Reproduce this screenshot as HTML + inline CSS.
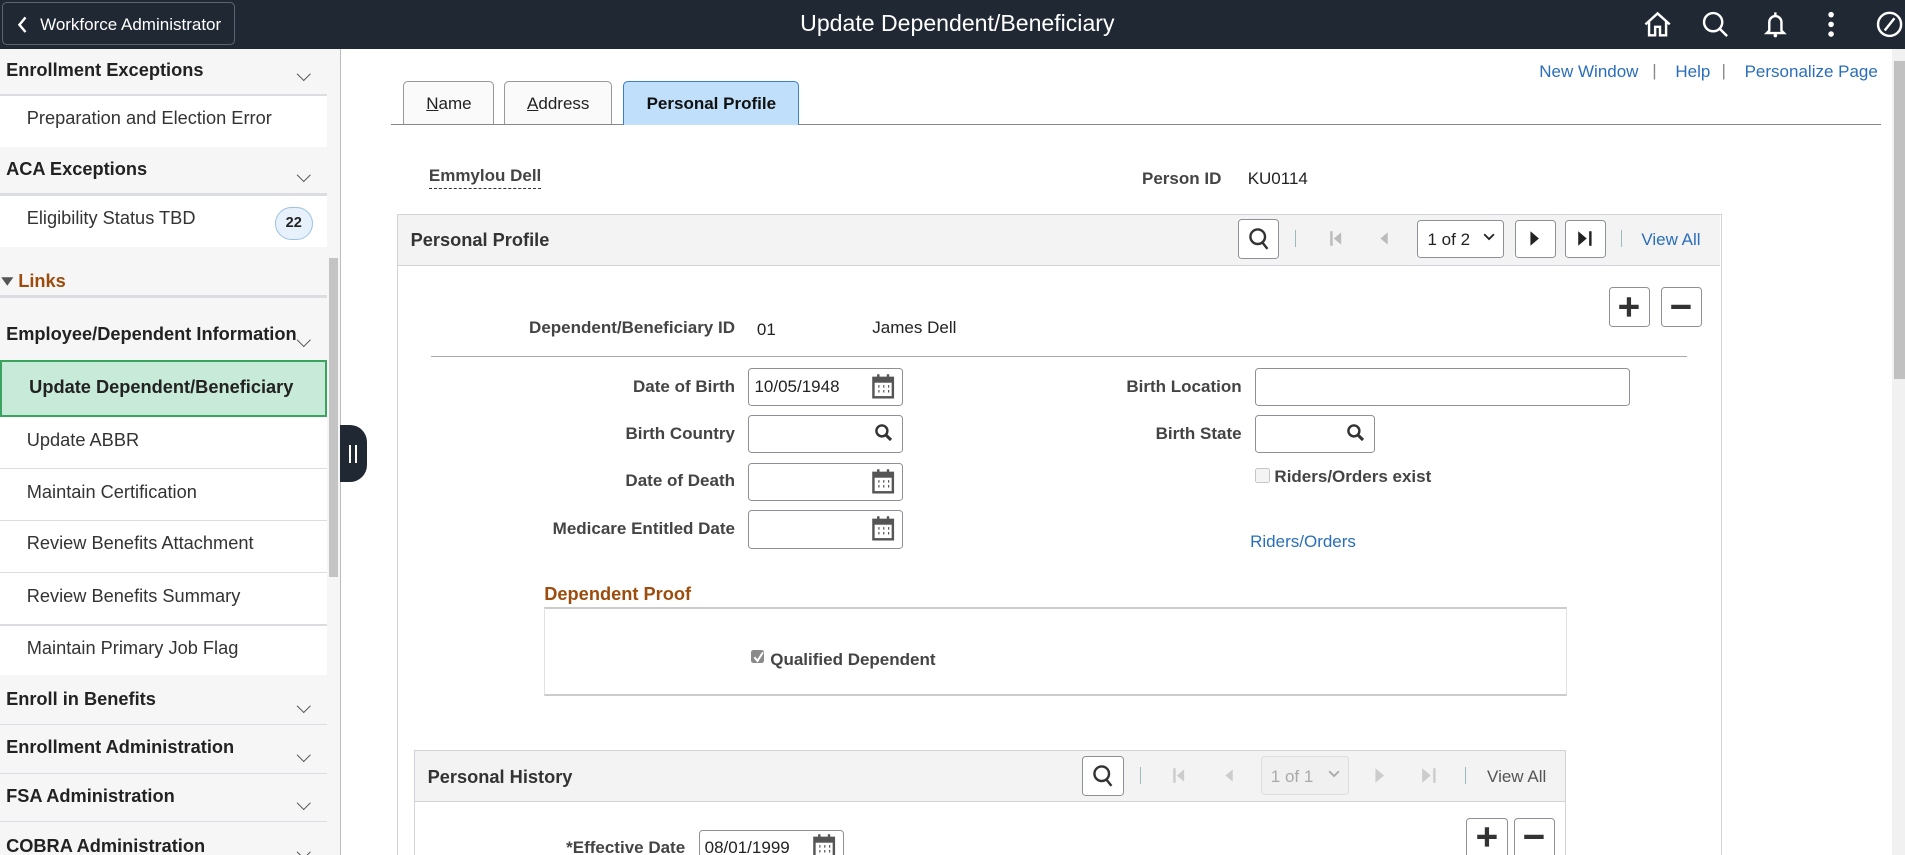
<!DOCTYPE html>
<html><head><meta charset="utf-8">
<style>
html,body{margin:0;padding:0;overflow:hidden;background:#fff;}
body{width:1905px;height:855px;}
#r{zoom:1.2149;width:1568px;height:704px;position:relative;overflow:hidden;font-family:"Liberation Sans",Arial,sans-serif;font-size:14px;color:#333;}
.a{position:absolute;white-space:nowrap;}
.hdr{left:0;top:0;width:1568px;height:40px;background:#1f2833;}
.sb{left:0;top:40px;width:280px;height:664px;background:#f6f6f6;border-right:1px solid #b9bcc2;}
.sec{position:absolute;left:5px;font-weight:bold;font-size:15px;color:#222;}
.chev{position:absolute;left:246px;width:7px;height:7px;border-right:1.3px solid #555;border-bottom:1.3px solid #555;transform:rotate(45deg);}
.item{position:absolute;left:0;width:269px;background:#fff;}
.item span{position:absolute;left:22px;font-size:15px;color:#333;}
.ln{position:absolute;left:0;width:269px;height:2px;background:#dcdde0;}
.blue{color:#2a6ebb;}
.lbl{position:absolute;font-weight:bold;color:#444;text-align:right;}
.inp{position:absolute;border:1px solid #8d9096;border-radius:3px;background:#fff;height:29px;box-sizing:border-box;}
.btn{position:absolute;border:1px solid #8d9096;border-radius:3px;background:#fff;box-sizing:border-box;}
</style></head><body><div id="r">
<div class="a hdr"></div>
<div class="a" style="left:2px;top:2px;width:190px;height:33px;border:1px solid #5b6470;border-radius:4px;"></div>
<svg class="a" style="left:14px;top:12px" width="10" height="16"><path d="M7 2L2 8l5 6" stroke="#fff" stroke-width="2" fill="none"/></svg>
<div class="a" style="left:33px;top:12px;color:#fff;font-size:14px;">Workforce Administrator</div>
<div class="a" style="left:0;width:1576px;top:8px;text-align:center;color:#fff;font-size:19px;">Update Dependent/Beneficiary</div>
<svg class="a" style="left:1352px;top:9px" width="24" height="22"><path d="M2 11L12 2l10 9M5 9v11h5v-7h4v7h5V9" stroke="#fff" stroke-width="2" fill="none"/></svg>
<svg class="a" style="left:1400px;top:8px" width="24" height="24"><circle cx="10" cy="10" r="7.5" stroke="#fff" stroke-width="2" fill="none"/><path d="M15.5 15.5l6 6" stroke="#fff" stroke-width="2"/></svg>
<svg class="a" style="left:1450px;top:8px" width="22" height="24"><path d="M11 2v3M6 17V10a5 5 0 0110 0v7l2 2H4z" stroke="#fff" stroke-width="2" fill="none"/><circle cx="11" cy="21" r="1.5" fill="#fff"/></svg>
<svg class="a" style="left:1502px;top:9px" width="10" height="22"><circle cx="5" cy="3" r="2.3" fill="#fff"/><circle cx="5" cy="11" r="2.3" fill="#fff"/><circle cx="5" cy="19" r="2.3" fill="#fff"/></svg>
<svg class="a" style="left:1543px;top:9px" width="24" height="24"><circle cx="12" cy="11" r="9.5" stroke="#fff" stroke-width="2" fill="none"/><path d="M16 6l-8 10" stroke="#fff" stroke-width="2"/></svg>

<div class="a sb"></div>
<div class="sec" style="top:49px">Enrollment Exceptions</div><div class="chev" style="top:57px"></div>
<div class="ln" style="top:77px"></div>
<div class="item" style="top:79px;height:42px"><span style="top:10px">Preparation and Election Error</span></div>
<div class="sec" style="top:131px">ACA Exceptions</div><div class="chev" style="top:140px"></div>
<div class="ln" style="top:159px"></div>
<div class="item" style="top:161px;height:42px"><span style="top:10px">Eligibility Status TBD</span>
<div style="position:absolute;left:226px;top:9px;width:30px;height:26px;border:1px solid #9dc1e6;border-radius:14px;background:#e6f1fb;text-align:center;line-height:26px;font-size:12px;font-weight:bold;color:#222">22</div></div>
<svg class="a" style="left:0;top:227px" width="12" height="10"><path d="M1 1h10L6 8z" fill="#555"/></svg>
<div class="a" style="left:15px;top:223px;color:#9c4d0d;font-weight:bold;font-size:15px">Links</div>
<div class="ln" style="top:243px"></div>
<div class="sec" style="top:267px">Employee/Dependent Information</div><div class="chev" style="top:276px"></div>
<div class="a" style="left:0;top:296px;width:269px;height:47px;background:#c8ead8;border:2px solid #3aa35e;box-sizing:border-box"></div>
<div class="a" style="left:24px;top:310px;font-size:15px;font-weight:bold;color:#222">Update Dependent/Beneficiary</div>
<div class="item" style="top:343px;height:42px"><span style="top:11px">Update ABBR</span></div>
<div class="ln" style="top:385px;height:1px"></div>
<div class="item" style="top:386px;height:42px"><span style="top:11px">Maintain Certification</span></div>
<div class="ln" style="top:428px;height:1px"></div>
<div class="item" style="top:429px;height:42px"><span style="top:10px">Review Benefits Attachment</span></div>
<div class="ln" style="top:471px;height:1px"></div>
<div class="item" style="top:472px;height:42px"><span style="top:10px">Review Benefits Summary</span></div>
<div class="ln" style="top:514px;height:1px"></div>
<div class="item" style="top:515px;height:41px"><span style="top:10px">Maintain Primary Job Flag</span></div>
<div class="sec" style="top:567px">Enroll in Benefits</div><div class="chev" style="top:577px"></div>
<div class="ln" style="top:596px;height:1px"></div>
<div class="sec" style="top:607px">Enrollment Administration</div><div class="chev" style="top:617px"></div>
<div class="ln" style="top:636px;height:1px"></div>
<div class="sec" style="top:647px">FSA Administration</div><div class="chev" style="top:657px"></div>
<div class="ln" style="top:676px;height:1px"></div>
<div class="sec" style="top:688px">COBRA Administration</div><div class="chev" style="top:697px"></div>
<div class="a" style="left:271px;top:212px;width:7px;height:263px;background:#c4c4c4"></div>
<div class="a" style="left:280px;top:350px;width:22px;height:47px;background:#1f2833;border-radius:0 14px 14px 0"></div>
<div class="a" style="left:287px;top:366px;width:2px;height:15px;background:#fff"></div>
<div class="a" style="left:292px;top:366px;width:2px;height:15px;background:#fff"></div>

<div class="a" style="left:1557px;top:40px;width:11px;height:664px;background:#f1f1f1"></div>
<div class="a" style="left:1559px;top:50px;width:9px;height:262px;background:#c1c1c1"></div>

<div class="a blue" style="left:1267px;top:51px">New Window</div>
<div class="a" style="left:1360px;top:50px;color:#888">|</div>
<div class="a blue" style="left:1379px;top:51px">Help</div>
<div class="a" style="left:1417px;top:50px;color:#888">|</div>
<div class="a blue" style="left:1436px;top:51px">Personalize Page</div>

<div class="a" style="left:322px;top:102px;width:1226px;height:1px;background:#888"></div>
<div class="a" style="left:332px;top:67px;width:75px;height:35px;border:1px solid #999;border-bottom:none;border-radius:4px 4px 0 0;background:#fafafa;box-sizing:border-box;text-align:center;line-height:36px;color:#222"><u>N</u>ame</div>
<div class="a" style="left:415px;top:67px;width:89px;height:35px;border:1px solid #999;border-bottom:none;border-radius:4px 4px 0 0;background:#fafafa;box-sizing:border-box;text-align:center;line-height:36px;color:#222"><u>A</u>ddress</div>
<div class="a" style="left:513px;top:67px;width:145px;height:36px;border:1px solid #3b7fd0;border-bottom:none;border-radius:4px 4px 0 0;background:#bfdffa;box-sizing:border-box;text-align:center;line-height:36px;color:#111;font-weight:bold">Personal Profile</div>

<div class="a" style="left:353px;top:137px;font-weight:bold;color:#444;border-bottom:1px dashed #333;padding-bottom:1px">Emmylou Dell</div>
<div class="a" style="left:940px;top:139px;font-weight:bold;color:#444">Person ID</div>
<div class="a" style="left:1027px;top:139px;color:#222">KU0114</div>

<div class="a" style="left:327px;top:176px;width:1090px;height:540px;border:1px solid #d0d3d8;box-sizing:border-box"></div>
<div class="a" style="left:328px;top:177px;width:1088px;height:41px;background:#f3f3f3;border-bottom:1px solid #d0d3d8"></div>
<div class="a" style="left:338px;top:189px;font-weight:bold;font-size:15px;color:#333">Personal Profile</div>
<div class="btn" style="left:1019px;top:180px;width:34px;height:33px"></div>
<svg class="a" style="left:1027px;top:187px" width="18" height="20"><circle cx="8" cy="8" r="6" stroke="#333" stroke-width="2" fill="none"/><path d="M12 13l4 5" stroke="#333" stroke-width="2"/></svg>
<div class="a" style="left:1066px;top:189px;width:1px;height:14px;background:#9bb"></div>
<svg class="a" style="left:1094px;top:189px" width="12" height="14"><path d="M2 1v12" stroke="#bbb" stroke-width="2"/><path d="M10 2v10L4 7z" fill="#bbb"/></svg>
<svg class="a" style="left:1134px;top:189px" width="10" height="14"><path d="M8 2v10L2 7z" fill="#bbb"/></svg>
<div class="btn" style="left:1166px;top:181px;width:72px;height:31px"></div>
<div class="a" style="left:1175px;top:189px;color:#222">1 of 2</div>
<svg class="a" style="left:1221px;top:192px" width="10" height="8"><path d="M1 1l4 4 4-4" stroke="#222" stroke-width="1.5" fill="none"/></svg>
<div class="btn" style="left:1247px;top:181px;width:34px;height:31px"></div>
<svg class="a" style="left:1258px;top:189px" width="10" height="14"><path d="M2 1v12l7-6z" fill="#222"/></svg>
<div class="btn" style="left:1288px;top:181px;width:34px;height:31px"></div>
<svg class="a" style="left:1298px;top:189px" width="14" height="14"><path d="M1 1v12l7-6z" fill="#222"/><path d="M11 1v12" stroke="#222" stroke-width="2"/></svg>
<div class="a" style="left:1334px;top:189px;width:1px;height:14px;background:#9bb"></div>
<div class="a blue" style="left:1351px;top:189px">View All</div>

<div class="btn" style="left:1324px;top:236px;width:34px;height:33px"></div>
<svg class="a" style="left:1332px;top:244px" width="18" height="18"><path d="M9 1v16M1 9h16" stroke="#333" stroke-width="3.5"/></svg>
<div class="btn" style="left:1367px;top:236px;width:34px;height:33px"></div>
<svg class="a" style="left:1375px;top:244px" width="18" height="18"><path d="M1 9h16" stroke="#333" stroke-width="3.5"/></svg>

<div class="lbl" style="left:400px;width:205px;top:262px">Dependent/Beneficiary ID</div>
<div class="a" style="left:623px;top:263px;color:#222">01</div>
<div class="a" style="left:718px;top:262px;color:#222">James Dell</div>
<div class="a" style="left:355px;top:293px;width:1034px;height:1px;background:#aaa"></div>

<div class="lbl" style="left:400px;width:205px;top:310px">Date of Birth</div>
<div class="inp" style="left:616px;top:303px;width:127px;height:31px"></div>
<div class="a" style="left:621px;top:310px;color:#222">10/05/1948</div>
<div class="lbl" style="left:400px;width:205px;top:349px">Birth Country</div>
<div class="inp" style="left:616px;top:342px;width:127px;height:31px"></div>
<div class="lbl" style="left:400px;width:205px;top:388px">Date of Death</div>
<div class="inp" style="left:616px;top:381px;width:127px;height:31px"></div>
<div class="lbl" style="left:400px;width:205px;top:427px">Medicare Entitled Date</div>
<div class="inp" style="left:616px;top:420px;width:127px;height:32px"></div>

<svg class="a" style="left:717px;top:307px" width="20" height="22"><rect x="2" y="4" width="16" height="16" fill="none" stroke="#555" stroke-width="2"/><rect x="2" y="4" width="16" height="4" fill="#555"/><path d="M6 1v5M14 1v5" stroke="#555" stroke-width="2"/><path d="M6 11h1M10 11h1M14 11h1M6 15h1M10 15h1M14 15h1" stroke="#555" stroke-width="2"/></svg>
<svg class="a" style="left:717px;top:385px" width="20" height="22"><rect x="2" y="4" width="16" height="16" fill="none" stroke="#555" stroke-width="2"/><rect x="2" y="4" width="16" height="4" fill="#555"/><path d="M6 1v5M14 1v5" stroke="#555" stroke-width="2"/><path d="M6 11h1M10 11h1M14 11h1M6 15h1M10 15h1M14 15h1" stroke="#555" stroke-width="2"/></svg>
<svg class="a" style="left:717px;top:424px" width="20" height="22"><rect x="2" y="4" width="16" height="16" fill="none" stroke="#555" stroke-width="2"/><rect x="2" y="4" width="16" height="4" fill="#555"/><path d="M6 1v5M14 1v5" stroke="#555" stroke-width="2"/><path d="M6 11h1M10 11h1M14 11h1M6 15h1M10 15h1M14 15h1" stroke="#555" stroke-width="2"/></svg>
<svg class="a" style="left:719px;top:348px" width="16" height="16"><circle cx="6.5" cy="6.5" r="4.5" stroke="#333" stroke-width="2" fill="none"/><path d="M10 10l4 4" stroke="#333" stroke-width="2.5"/></svg>

<div class="lbl" style="left:850px;width:172px;top:310px">Birth Location</div>
<div class="inp" style="left:1033px;top:303px;width:309px;height:31px"></div>
<div class="lbl" style="left:850px;width:172px;top:349px">Birth State</div>
<div class="inp" style="left:1033px;top:342px;width:99px;height:31px"></div>
<svg class="a" style="left:1108px;top:348px" width="16" height="16"><circle cx="6.5" cy="6.5" r="4.5" stroke="#333" stroke-width="2" fill="none"/><path d="M10 10l4 4" stroke="#333" stroke-width="2.5"/></svg>
<div class="a" style="left:1033px;top:385px;width:11px;height:11px;border:1px solid #c5c5c5;border-radius:2px;background:#f4f4f4"></div>
<div class="a" style="left:1049px;top:384px;font-weight:bold;color:#444">Riders/Orders exist</div>
<div class="a blue" style="left:1029px;top:438px">Riders/Orders</div>

<div class="a" style="left:448px;top:481px;color:#9c4d0d;font-weight:bold;font-size:15px">Dependent Proof</div>
<div class="a" style="left:448px;top:500px;width:842px;height:73px;border:1px solid #e2e2e2;border-top:2px solid #ccc;border-bottom:2px solid #ccc;box-sizing:border-box"></div>
<div class="a" style="left:618px;top:535px;width:11px;height:11px;background:#8a8a8a;border-radius:2px"></div>
<svg class="a" style="left:619px;top:535px" width="11" height="11"><path d="M2 6l2.5 3L9 2" stroke="#fff" stroke-width="1.6" fill="none"/></svg>
<div class="a" style="left:634px;top:535px;font-weight:bold;color:#444">Qualified Dependent</div>

<div class="a" style="left:341px;top:617px;width:948px;height:100px;border:1px solid #d0d3d8;box-sizing:border-box"></div>
<div class="a" style="left:342px;top:618px;width:946px;height:41px;background:#f3f3f3;border-bottom:1px solid #d0d3d8"></div>
<div class="a" style="left:352px;top:631px;font-weight:bold;font-size:15px;color:#333">Personal History</div>
<div class="btn" style="left:891px;top:622px;width:34px;height:33px"></div>
<svg class="a" style="left:899px;top:629px" width="18" height="20"><circle cx="8" cy="8" r="6" stroke="#333" stroke-width="2" fill="none"/><path d="M12 13l4 5" stroke="#333" stroke-width="2"/></svg>
<div class="a" style="left:938px;top:631px;width:1px;height:14px;background:#9bb"></div>
<svg class="a" style="left:965px;top:631px" width="12" height="14"><path d="M2 1v12" stroke="#ccc" stroke-width="2"/><path d="M10 2v10L4 7z" fill="#ccc"/></svg>
<svg class="a" style="left:1007px;top:631px" width="10" height="14"><path d="M8 2v10L2 7z" fill="#ccc"/></svg>
<div class="a" style="left:1038px;top:622px;width:72px;height:32px;border:1px solid #ddd;border-radius:3px;background:#f0f0f0;box-sizing:border-box"></div>
<div class="a" style="left:1046px;top:631px;color:#aaa">1 of 1</div>
<svg class="a" style="left:1093px;top:634px" width="10" height="8"><path d="M1 1l4 4 4-4" stroke="#aaa" stroke-width="1.5" fill="none"/></svg>
<svg class="a" style="left:1130px;top:631px" width="10" height="14"><path d="M2 1v12l7-6z" fill="#ccc"/></svg>
<svg class="a" style="left:1170px;top:631px" width="14" height="14"><path d="M1 1v12l7-6z" fill="#ccc"/><path d="M11 1v12" stroke="#ccc" stroke-width="2"/></svg>
<div class="a" style="left:1206px;top:631px;width:1px;height:14px;background:#9bb"></div>
<div class="a" style="left:1224px;top:631px;color:#555">View All</div>
<div class="btn" style="left:1207px;top:673px;width:34px;height:40px"></div>
<svg class="a" style="left:1215px;top:680px" width="18" height="18"><path d="M9 1v16M1 9h16" stroke="#333" stroke-width="3.5"/></svg>
<div class="btn" style="left:1246px;top:673px;width:34px;height:40px"></div>
<svg class="a" style="left:1254px;top:680px" width="18" height="18"><path d="M1 9h16" stroke="#333" stroke-width="3.5"/></svg>
<div class="lbl" style="left:400px;width:164px;top:690px">*Effective Date</div>
<div class="inp" style="left:575px;top:683px;width:120px;height:32px"></div>
<div class="a" style="left:580px;top:690px;color:#222">08/01/1999</div>
<svg class="a" style="left:668px;top:686px" width="20" height="22"><rect x="2" y="4" width="16" height="16" fill="none" stroke="#555" stroke-width="2"/><rect x="2" y="4" width="16" height="4" fill="#555"/><path d="M6 1v5M14 1v5" stroke="#555" stroke-width="2"/><path d="M6 11h1M10 11h1M14 11h1M6 15h1M10 15h1M14 15h1" stroke="#555" stroke-width="2"/></svg>
</div></body></html>
